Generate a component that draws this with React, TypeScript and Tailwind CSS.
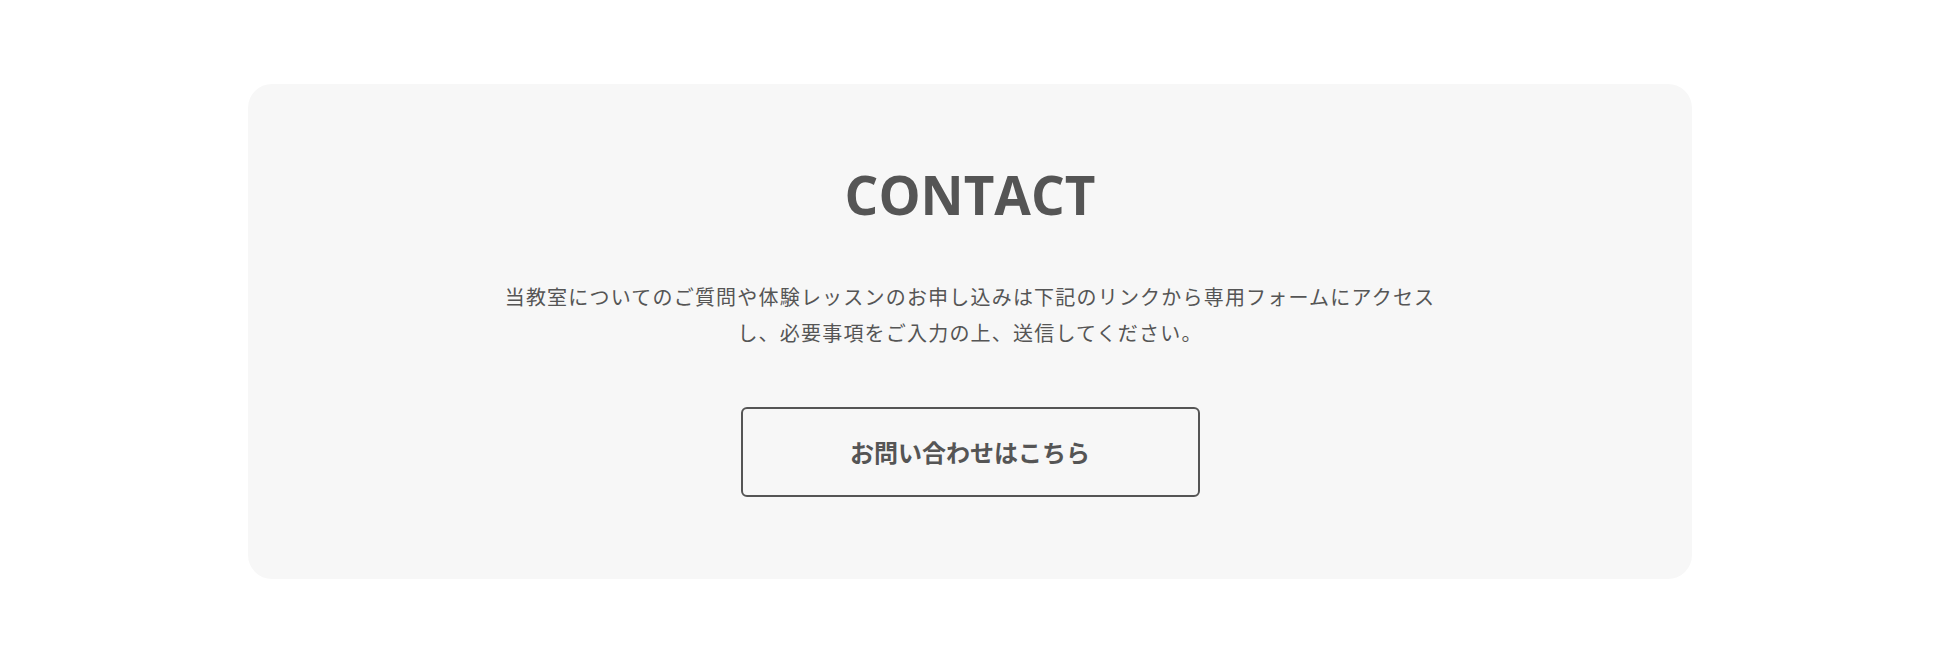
export default function App() {
  return (
    <div className="min-h-[648px] bg-white px-[248px] pt-[84px] pb-[69px]">
      <section className="flex flex-col items-center rounded-3xl bg-[#f7f7f7] pt-[84px] pb-[82px] text-[#555]">
        <h2 className="font-['Open_Sans',sans-serif] text-[53px] font-bold leading-[54px]">
          CONTACT
        </h2>

        <p className="mt-[57px] max-w-[944px] text-center font-['Noto_Sans_CJK_JP',sans-serif] text-[20px] leading-[36px] tracking-[0.06em]">
          当教室についてのご質問や体験レッスンのお申し込みは下記のリンクから専用フォームにアクセスし、必要事項をご入力の上、送信してください。
        </p>

        <a
          href="#"
          className="mt-[56px] flex h-[90px] w-[459px] items-center justify-center rounded-md border-2 border-[#555] font-['Noto_Sans_CJK_JP',sans-serif] text-[24px] font-bold"
        >
          お問い合わせはこちら
        </a>
      </section>
    </div>
  );
}
